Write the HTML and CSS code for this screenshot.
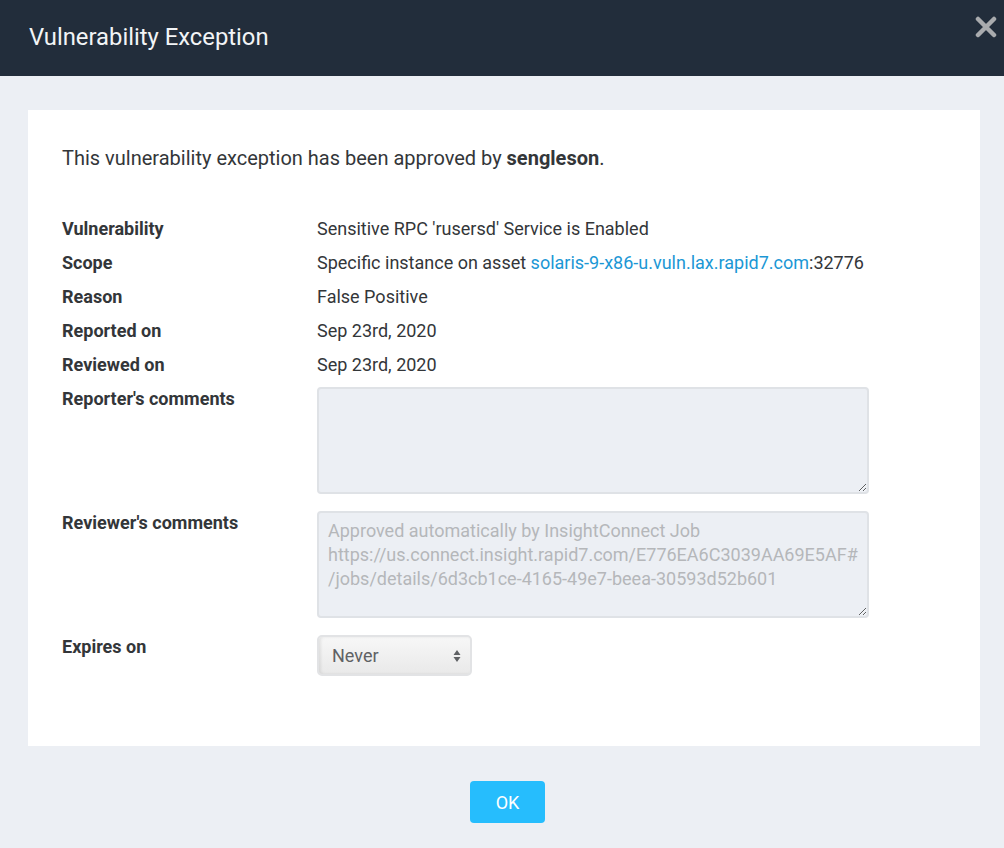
FILE: index.html
```html
<!DOCTYPE html>
<html>
<head>
<meta charset="utf-8">
<link rel="stylesheet" href="styles.css">
</head>
<body>
<div class="dialog">
  <header class="dialog-header">
    <h1 class="dialog-title">Vulnerability Exception</h1>
    <button class="close-btn" aria-label="Close">
      <svg width="22" height="22" viewBox="0 0 22 22"><path d="M3 3 L19 19 M19 3 L3 19" stroke="#a9abae" stroke-width="4.5" stroke-linecap="round"/></svg>
    </button>
  </header>
  <main class="dialog-body">
    <section class="panel">
      <p class="intro">This vulnerability exception has been approved by <strong>sengleson</strong>.</p>
      <div class="details">
        <div class="label">Vulnerability</div>
        <div class="value">Sensitive RPC 'rusersd' Service is Enabled</div>
        <div class="label">Scope</div>
        <div class="value">Specific instance on asset <a class="link" href="#">solaris-9-x86-u.vuln.lax.rapid7.com</a>:32776</div>
        <div class="label">Reason</div>
        <div class="value">False Positive</div>
        <div class="label">Reported on</div>
        <div class="value">Sep 23rd, 2020</div>
        <div class="label">Reviewed on</div>
        <div class="value">Sep 23rd, 2020</div>
        <div class="label">Reporter's comments</div>
        <div class="value"><textarea class="comment" disabled></textarea></div>
        <div class="label">Reviewer's comments</div>
        <div class="value"><textarea class="comment" disabled>Approved automatically by InsightConnect Job
https://us.connect.insight.rapid7.com/E776EA6C3039AA69E5AF#
/jobs/details/6d3cb1ce-4165-49e7-beea-30593d52b601</textarea></div>
        <div class="label">Expires on</div>
        <div class="value">
          <div class="select">
            <span class="select-text">Never</span>
            <svg class="select-arrows" width="8" height="14" viewBox="0 0 8 14"><path d="M4 1 L7.5 6 H0.5 Z M4 13 L7.5 8 H0.5 Z" fill="#5f6164"/></svg>
          </div>
        </div>
      </div>
    </section>
    <div class="actions">
      <button class="ok-btn">OK</button>
    </div>
  </main>
</div>
</body>
</html>
```
FILE: styles.css
```css
* { box-sizing: border-box; }
html, body { margin: 0; padding: 0; }
body {
  background: #eceff4;
  font-family: Roboto, "Noto Sans", "Liberation Sans", sans-serif;
  color: #333639;
  width: 1004px;
  height: 848px;
  overflow: hidden;
}
.dialog-header {
  height: 76px;
  background: #222d3b;
  display: flex;
  align-items: center;
  justify-content: space-between;
  padding: 0 7px 0 29px;
}
.dialog-title {
  margin: 0;
  font-weight: 400;
  font-size: 23.8px;
  color: #f2f4f6;
  padding-bottom: 2px;
}
.close-btn {
  background: none;
  border: 0;
  padding: 0;
  align-self: flex-start;
  margin-top: 16px;
  width: 22px;
  height: 22px;
  display: flex;
}
.dialog-body {
  padding: 34px 24px 0 28px;
}
.panel {
  background: #ffffff;
  height: 636px;
  padding: 36px 34px 0 34px;
}
.intro {
  margin: 0 0 47px 0;
  font-size: 20px;
  line-height: 24px;
  color: #333639;
}
.intro strong { font-weight: 700; }
.details {
  display: grid;
  grid-template-columns: 255px 552px;
  row-gap: 10px;
  font-size: 18px;
  line-height: 24px;
}
.label {
  font-weight: 700;
  color: #333639;
}
.value { color: #333639; }
.link { color: #1b97d5; text-decoration: none; }
.comment {
  display: block;
  width: 552px;
  height: 107px;
  margin: 0 0 7px 0;
  background: #eceff4;
  border: 2px solid #dfe2e6;
  border-radius: 4px;
  padding: 6px 2px 4px 9px;
  font-family: Roboto, "Noto Sans", "Liberation Sans", sans-serif;
  font-size: 18px;
  line-height: 24px;
  color: #b5b7ba;
  resize: both;
  white-space: pre;
  overflow: hidden;
}
.select {
  width: 155px;
  height: 41px;
  margin-top: 0;
  border: 2px solid #e2e3e5;
  border-radius: 5px;
  background: linear-gradient(#f7f7f7, #e9e9e9);
  box-shadow: inset 2px 0 3px rgba(0,0,0,0.08);
  display: flex;
  align-items: center;
  justify-content: space-between;
  padding: 0 9px 0 13px;
}
.select-text { color: #5f6164; font-size: 18px; }
.actions {
  display: flex;
  justify-content: center;
  padding-top: 35px;
}
.ok-btn {
  width: 75px;
  height: 42px;
  border: 0;
  border-radius: 4px;
  background: #26bdfd;
  color: #ffffff;
  font-family: Roboto, "Noto Sans", "Liberation Sans", sans-serif;
  font-size: 18px;
  margin-left: 7px;
}
```
